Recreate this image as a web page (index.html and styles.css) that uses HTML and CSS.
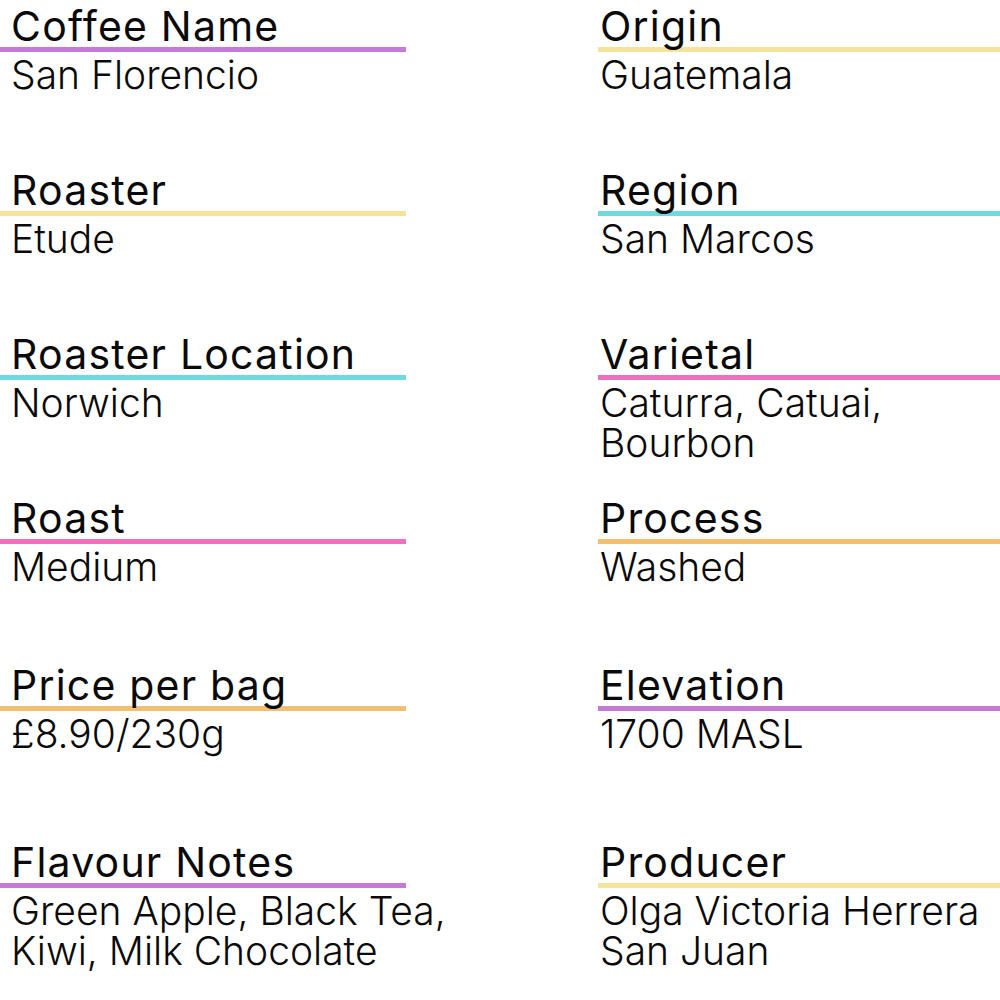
FILE: index.html
```html
<!DOCTYPE html>
<html lang="en">
<head>
<meta charset="utf-8">
<title>Coffee</title>
<link rel="stylesheet" href="styles.css">
</head>
<body>
<main class="sheet">
  <section class="col col-left">
    <div class="field r1"><div class="label">Coffee Name</div><div class="bar purple"></div><div class="value">San Florencio</div></div>
    <div class="field r2"><div class="label">Roaster</div><div class="bar yellow"></div><div class="value">Etude</div></div>
    <div class="field r3"><div class="label">Roaster Location</div><div class="bar cyan"></div><div class="value">Norwich</div></div>
    <div class="field r4"><div class="label">Roast</div><div class="bar pink"></div><div class="value">Medium</div></div>
    <div class="field r5"><div class="label">Price per bag</div><div class="bar orange"></div><div class="value">£8.90/230g</div></div>
    <div class="field r6"><div class="label">Flavour Notes</div><div class="bar purple"></div><div class="value"><div class="line">Green Apple, Black Tea,</div><div class="line">Kiwi, Milk Chocolate</div></div></div>
  </section>
  <section class="col col-right">
    <div class="field r1"><div class="label">Origin</div><div class="bar yellow"></div><div class="value">Guatemala</div></div>
    <div class="field r2"><div class="label">Region</div><div class="bar cyan"></div><div class="value">San Marcos</div></div>
    <div class="field r3"><div class="label">Varietal</div><div class="bar pink"></div><div class="value"><div class="line">Caturra, Catuai,</div><div class="line">Bourbon</div></div></div>
    <div class="field r4"><div class="label">Process</div><div class="bar orange"></div><div class="value">Washed</div></div>
    <div class="field r5"><div class="label">Elevation</div><div class="bar purple"></div><div class="value">1700 MASL</div></div>
    <div class="field r6"><div class="label">Producer</div><div class="bar yellow"></div><div class="value"><div class="line">Olga Victoria Herrera</div><div class="line">San Juan</div></div></div>
  </section>
</main>
</body>
</html>
```
FILE: styles.css
```css
html, body {
  margin: 0;
  padding: 0;
  background: #ffffff;
}
body {
  width: 1000px;
  height: 1000px;
  overflow: hidden;
  font-family: Inter, "Noto Sans", "Liberation Sans", sans-serif;
  color: #0a0a0a;
}
.sheet {
  display: grid;
  grid-template-columns: 406px 402px;
  column-gap: 192px;
}
.col {
  display: grid;
  grid-template-columns: minmax(0, 1fr);
  grid-template-rows: 164px 164px 164px 167px 177px auto;
  min-width: 0;
}
.label {
  font-size: 41px;
  font-weight: 400;
  letter-spacing: 1.2px;
  line-height: 42px;
  padding-top: 5px;
  white-space: nowrap;
}
.bar {
  height: 5px;
}
.value {
  font-size: 39px;
  font-weight: 300;
  line-height: 40px;
  padding-top: 3px;
  white-space: nowrap;
}
.line {
  line-height: 40px;
}
.col-left .label, .col-left .value { padding-left: 11px; }
.col-right .label, .col-right .value { padding-left: 2px; }
.purple { background: #c57bd6; }
.yellow { background: #f3e39c; }
.cyan { background: #6fd9dd; }
.pink { background: #ef70bf; }
.orange { background: #f1bf6f; }
```
